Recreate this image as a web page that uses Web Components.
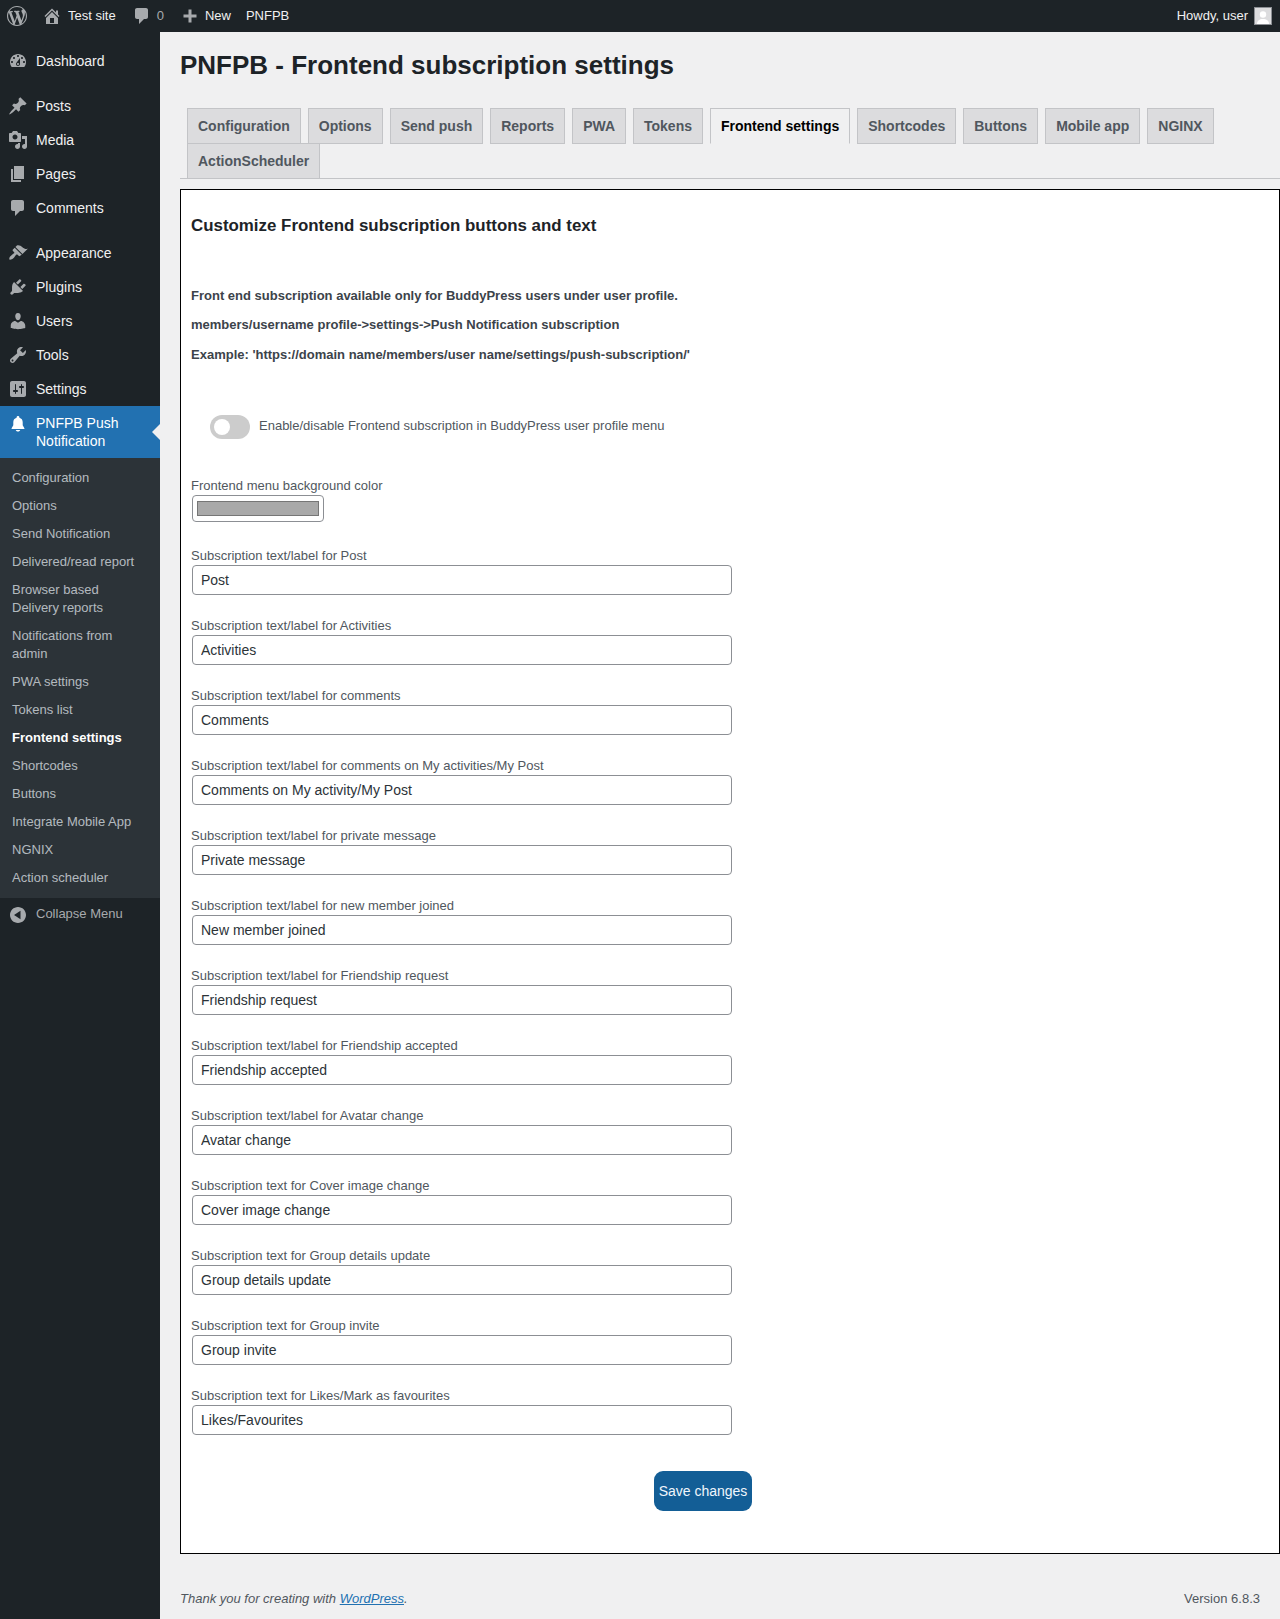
<!DOCTYPE html>
<html lang="en">
<head>
<meta charset="utf-8">
<title>PNFPB - Frontend subscription settings</title>
<style>
  html, body { margin: 0; padding: 0; background: #f0f0f1; }
  body { font: 13px/1.4 "Liberation Sans", Arial, sans-serif; color: #3c434a; }
</style>
</head>
<body>
<wp-admin-page></wp-admin-page>

<script>
const ICONS = {
  wordpress: 'M20 10c0-5.51-4.49-10-10-10C4.48 0 0 4.49 0 10c0 5.52 4.48 10 10 10 5.51 0 10-4.48 10-10zM7.78 15.37L4.37 6.22c.55-.02 1.17-.08 1.17-.08.5-.06.44-1.13-.06-1.11 0 0-1.45.11-2.37.11-.18 0-.37 0-.58-.01C4.12 2.69 6.87 1.11 10 1.11c2.33 0 4.45.87 6.05 2.34-.68-.11-1.65.39-1.65 1.58 0 .74.45 1.36.9 2.1.35.61.55 1.36.55 2.46 0 1.49-1.4 5-1.4 5l-3.03-8.37c.54-.02.82-.17.82-.17.5-.05.44-1.25-.06-1.22 0 0-1.44.12-2.38.12-.87 0-2.33-.12-2.33-.12-.5-.03-.56 1.2-.06 1.22l.92.08 1.26 3.41zM17.41 10c.24-.64.74-1.87.43-4.25.7 1.29 1.05 2.71 1.05 4.25 0 3.29-1.73 6.24-4.4 7.78.97-2.59 1.94-5.2 2.92-7.78zM6.1 18.09C3.12 16.65 1.11 13.53 1.11 10c0-1.3.23-2.48.72-3.59C3.25 10.3 4.67 14.2 6.1 18.09zm4.03-6.63l2.58 6.98c-.86.29-1.76.45-2.71.45-.79 0-1.57-.11-2.29-.33.81-2.38 1.62-4.74 2.42-7.1z',
  home: 'M16 8.5l1.53 1.53-1.06 1.06L10 4.62l-6.47 6.47-1.06-1.06L10 2.5l4 4v-2h2v4zm-6-2.46l6 5.99V18H4v-5.97zM12 17v-5H8v5h4z',
  comments: 'M5 2h9c1.1 0 2 .9 2 2v7c0 1.1-.9 2-2 2h-2l-5 5v-5H5c-1.1 0-2-.9-2-2V4c0-1.1.9-2 2-2z',
  plus: 'M8.5 3.5h3v5h5v3h-5v5h-3v-5h-5v-3h5z',
  dashboard: 'M3.76 16h12.48c1.1-1.37 1.76-3.11 1.76-5 0-4.42-3.58-8-8-8s-8 3.58-8 8c0 1.89.66 3.63 1.76 5zM10 4c.55 0 1 .45 1 1s-.45 1-1 1-1-.45-1-1 .45-1 1-1zM6 6c.55 0 1 .45 1 1s-.45 1-1 1-1-.45-1-1 .45-1 1-1zm8 0c.55 0 1 .45 1 1s-.45 1-1 1-1-.45-1-1 .45-1 1-1zm-5.37 5.55L12 7v6c0 1.1-.9 2-2 2s-2-.9-2-2c0-.57.24-1.08.63-1.45zM4 10c.55 0 1 .45 1 1s-.45 1-1 1-1-.45-1-1 .45-1 1-1zm12 0c.55 0 1 .45 1 1s-.45 1-1 1-1-.45-1-1 .45-1 1-1zm-5 3c0-.55-.45-1-1-1s-1 .45-1 1 .45 1 1 1 1-.45 1-1z',
  post: 'M10.44 3.02l1.82-1.82 6.36 6.35-1.83 1.82c-1.05-.68-2.48-.57-3.41.36l-.75.75c-.92.93-1.04 2.35-.35 3.41l-1.83 1.82-2.41-2.41-2.8 2.79c-.42.42-3.38 2.71-3.8 2.29s1.86-3.39 2.28-3.81l2.79-2.79L4.1 9.36l1.83-1.82c1.05.69 2.48.57 3.4-.36l.75-.75c.93-.92 1.05-2.35.36-3.41z',
  media: 'M13 11V4c0-.55-.45-1-1-1h-1.67L9 1H5L3.67 3H2c-.55 0-1 .45-1 1v7c0 .55.45 1 1 1h10c.55 0 1-.45 1-1zM7 4.5c1.38 0 2.5 1.12 2.5 2.5S8.38 9.5 7 9.5 4.5 8.38 4.5 7 5.62 4.5 7 4.5zM14 6h5v10.5c0 1.38-1.12 2.5-2.5 2.5S14 17.88 14 16.5s1.12-2.5 2.5-2.5c.17 0 .34.02.5.05V9h-3V6zm-4 8.05V13h2v3.5c0 1.38-1.12 2.5-2.5 2.5S7 17.88 7 16.5 8.12 14 9.5 14c.17 0 .34.02.5.05z',
  page: 'M6 15V2h10v13H6zm-1 1h8v2H3V5h2v11z',
  appearance: 'M14.48 11.06L7.41 3.99l1.5-1.5c.5-.56 2.3-.47 3.51.32 1.21.8 1.43 1.28 2.91 2.1 1.18.64 2.45 1.26 4.45.85zm-.71.71L6.7 4.7 4.93 6.47c-.39.39-.39 1.02 0 1.41l1.06 1.06c.39.39.39 1.03 0 1.42-.6.6-1.43 1.11-2.21 1.69-.35.26-.7.53-1.01.84C1.43 13.71.96 15.78 1.5 16.5c.54.54 2.6.07 4.14-1.48.31-.31.58-.66.84-1.01.58-.78 1.09-1.61 1.69-2.21.39-.39 1.03-.39 1.42 0l1.06 1.06c.39.39 1.02.39 1.41 0z',
  plugins: 'M13.11 4.36L9.87 7.6 8 5.73l3.24-3.24c.35-.34 1.05-.2 1.56.32.52.51.66 1.21.31 1.55zm-8 1.77l.91-1.12 9.01 9.01-1.19.84c-.71.71-2.63 1.16-3.82 1.16H6.14L4.9 17.26c-.59.59-1.54.59-2.12 0-.59-.58-.59-1.53 0-2.12l1.24-1.24v-3.88c0-1.13.4-3.19 1.09-3.89zm7.26 3.97l3.24-3.24c.34-.35 1.04-.21 1.55.31.52.51.66 1.21.31 1.55l-3.24 3.25z',
  users: 'M10 9.25c-2.27 0-2.73-3.44-2.73-3.44C7 4.02 7.82 2 9.97 2c2.16 0 2.98 2.02 2.71 3.81 0 0-.41 3.44-2.68 3.44zm0 2.57L12.72 10c2.39 0 4.52 2.33 4.52 4.53v2.49s-3.65 1.13-7.24 1.13c-3.65 0-7.24-1.13-7.24-1.13v-2.49c0-2.25 1.94-4.48 4.47-4.48z',
  tools: 'M16.68 9.77c-1.34 1.34-3.3 1.67-4.95.99l-5.41 6.52c-.99.99-2.59.99-3.58 0s-.99-2.59 0-3.57l6.52-5.42c-.68-1.65-.35-3.61.99-4.95 1.28-1.28 3.12-1.62 4.72-1.06l-2.89 2.89 2.82 2.82 2.86-2.87c.53 1.58.18 3.39-1.08 4.65zM3.81 16.21c.4.39 1.04.39 1.43 0 .4-.4.4-1.04 0-1.43-.39-.4-1.03-.4-1.43 0-.39.39-.39 1.03 0 1.43z',
  settings: 'M18 16V4c0-1.1-.9-2-2-2H4c-1.1 0-2 .9-2 2v12c0 1.1.9 2 2 2h12c1.1 0 2-.9 2-2zM8 11h1c.55 0 1 .45 1 1s-.45 1-1 1H8v1.5c0 .28-.22.5-.5.5s-.5-.22-.5-.5V13H6c-.55 0-1-.45-1-1s.45-1 1-1h1V5.5c0-.28.22-.5.5-.5s.5.22.5.5V11zm5-2h-1c-.55 0-1-.45-1-1s.45-1 1-1h1V5.5c0-.28.22-.5.5-.5s.5.22.5.5V7h1c.55 0 1 .45 1 1s-.45 1-1 1h-1v5.5c0 .28-.22.5-.5.5s-.5-.22-.5-.5V9z',
  bell: 'M10 3c-.8 0-1.4.6-1.4 1.4v.4C6.4 5.4 5.3 7 5.3 9.3v2.9L3.6 15.2v.9h12.8v-.9l-1.7-3v-2.9c0-2.3-1.1-3.9-3.3-4.5v-.4c0-.8-.6-1.4-1.4-1.4zM7.8 17h4.4c0 .9-1 1.5-2.2 1.5s-2.2-.6-2.2-1.5z',
  collapse: 'M10 2c-4.42 0-8 3.58-8 8s3.58 8 8 8 8-3.58 8-8-3.58-8-8-8zm2.5 12.2L6 10l6.5-4.2v8.4z',
}

// shadow root + template in one go
const define = (tag, html, onInit) => {
  const template = document.createElement('template')
  template.innerHTML = html
  customElements.define(tag, class extends HTMLElement {
    constructor() {
      super()
      this.attachShadow({ mode: 'open' }).appendChild(template.content.cloneNode(true))
    }
    connectedCallback() {
      if (onInit) onInit(this, this.shadowRoot)
    }
  })
}

const attr = (e, name) => e.getAttribute(name) || ''

// the name can land after connect (menu-item sets it from its own init)
customElements.define('wp-icon', class extends HTMLElement {
  static observedAttributes = ['name']

  constructor() {
    super()
    this.attachShadow({ mode: 'open' }).innerHTML = `
      <style>
        :host { display: block; width: 20px; height: 20px; flex: none; }
        svg { display: block; width: 100%; height: 100%; fill: currentColor; }
      </style>
      <svg viewBox="0 0 20 20"><path></path></svg>
    `
  }

  attributeChangedCallback(_, __, name) {
    this.shadowRoot.querySelector('path').setAttribute('d', ICONS[name] || '')
  }
})

define('bar-item', `
  <style>
    :host { display: flex; align-items: center; height: 32px; color: #f0f0f1; font-size: 13px; line-height: 32px; white-space: nowrap; }
    ::slotted(wp-icon) { color: #a7aaad; margin-right: 6px; }
  </style>
  <slot name="icon"></slot><slot></slot>
`)

define('admin-bar', `
  <style>
    :host { display: flex; align-items: center; height: 32px; padding: 0 8px 0 7px; background: #1d2327; font-size: 13px; }
    .spacer { flex: 1; }
    .avatar { width: 16px; height: 16px; border: 1px solid #8c8f94; background: #dcdcde; margin-left: 6px; overflow: hidden; }
    .avatar svg { display: block; width: 16px; height: 16px; fill: #fff; }
    .logo { margin-right: 15px; }
    .site { margin-right: 16px; }
    .count { margin-right: 16px; }
    .new { margin-right: 15px; }
    .dim { color: #a7aaad; margin-left: -1px; }
    .plus { margin-right: 5px; }
  </style>
  <bar-item class="logo"><wp-icon slot="icon" name="wordpress" style="margin-right:0"></wp-icon></bar-item>
  <bar-item class="site"><wp-icon slot="icon" name="home"></wp-icon>Test site</bar-item>
  <bar-item class="count"><wp-icon slot="icon" name="comments"></wp-icon><span class="dim">0</span></bar-item>
  <bar-item class="new"><wp-icon slot="icon" name="plus" class="plus"></wp-icon>New</bar-item>
  <bar-item>PNFPB</bar-item>
  <div class="spacer"></div>
  <bar-item>Howdy, user</bar-item>
  <div class="avatar"><svg viewBox="0 0 16 16"><circle cx="8" cy="6.5" r="3.2"></circle><path d="M2 16c0-3.5 2.5-5 6-5s6 1.5 6 5z"></path></svg></div>
`)

define('menu-item', `
  <style>
    :host { display: flex; align-items: flex-start; width: 160px; box-sizing: border-box; min-height: 34px; padding: 7px 8px 8px 8px; color: #f0f0f1; font-size: 14px; line-height: 18.2px; position: relative; }
    :host([current]) { margin-top: -1px; padding-top: 8px; padding-bottom: 7.6px; background: #2271b1; color: #fff; }
    wp-icon { color: #a7aaad; margin-right: 8px; margin-top: -1px; }
    :host([current]) wp-icon { color: #fff; }
    .arrow { display: none; position: absolute; right: 0; top: 18px; border: 8px solid transparent; border-right-color: #f0f0f1; border-left: 0; }
    :host([current]) .arrow { display: block; }
  </style>
  <wp-icon></wp-icon><div><slot></slot></div><span class="arrow"></span>
`, (e, root) => {
  root.querySelector('wp-icon').setAttribute('name', attr(e, 'icon'))
})

define('sub-item', `
  <style>
    :host { display: block; padding: 5px 12px; color: rgba(240,246,252,.7); font-size: 13px; line-height: 18px; }
    :host([current]) { color: #fff; font-weight: 600; }
  </style>
  <slot></slot>
`)

define('side-menu', `
  <style>
    :host { display: block; width: 160px; flex: none; background: #1d2327; padding-top: 13px; }
    .gap { height: 11px; }
    .sub { background: #2c3338; padding: 6px 0 6px; }
    .collapse { display: flex; align-items: flex-start; padding: 7px 8px 8px 8px; color: #a7aaad; font-size: 13px; line-height: 18.2px; }
    .collapse wp-icon { margin-right: 8px; }
  </style>
  <menu-item icon="dashboard">Dashboard</menu-item>
  <div class="gap"></div>
  <menu-item icon="post">Posts</menu-item>
  <menu-item icon="media">Media</menu-item>
  <menu-item icon="page">Pages</menu-item>
  <menu-item icon="comments">Comments</menu-item>
  <div class="gap"></div>
  <menu-item icon="appearance">Appearance</menu-item>
  <menu-item icon="plugins">Plugins</menu-item>
  <menu-item icon="users">Users</menu-item>
  <menu-item icon="tools">Tools</menu-item>
  <menu-item icon="settings">Settings</menu-item>
  <menu-item icon="bell" current>PNFPB Push Notification</menu-item>
  <div class="sub">
    <sub-item>Configuration</sub-item>
    <sub-item>Options</sub-item>
    <sub-item>Send Notification</sub-item>
    <sub-item>Delivered/read report</sub-item>
    <sub-item>Browser based Delivery reports</sub-item>
    <sub-item>Notifications from admin</sub-item>
    <sub-item>PWA settings</sub-item>
    <sub-item>Tokens list</sub-item>
    <sub-item current>Frontend settings</sub-item>
    <sub-item>Shortcodes</sub-item>
    <sub-item>Buttons</sub-item>
    <sub-item>Integrate Mobile App</sub-item>
    <sub-item>NGNIX</sub-item>
    <sub-item>Action scheduler</sub-item>
  </div>
  <div class="collapse"><wp-icon name="collapse"></wp-icon><span>Collapse Menu</span></div>
`)

define('nav-tab', `
  <style>
    :host { display: block; box-sizing: border-box; height: 36px; margin: 0 0 -1px 7px; padding: 5px 10px; background: #dcdcde; border: 1px solid #c3c4c7; color: #50575e; font-size: 14px; font-weight: 600; line-height: 24px; white-space: nowrap; }
    :host([active]) { background: #f0f0f1; color: #000; border-bottom-color: #f0f0f1; }
  </style>
  <slot></slot>
`)

define('nav-tabs', `
  <style>
    :host { display: flex; flex-wrap: wrap; border-bottom: 1px solid #c3c4c7; }
  </style>
  <slot></slot>
`)

define('text-field', `
  <style>
    :host { display: block; width: 543px; margin-bottom: 22px; }
    label { display: block; color: #50575e; font-size: 13px; line-height: 18px; }
    input { display: block; box-sizing: border-box; width: 540px; height: 30px; margin-left: 1px; padding: 0 8px; border: 1px solid #8c8f94; border-radius: 4px; background: #fff; color: #2c3338; font: 14px/28px "Liberation Sans", Arial, sans-serif; outline: none; }
  </style>
  <label></label>
  <input type="text">
`, (e, root) => {
  root.querySelector('label').textContent = attr(e, 'label')
  root.querySelector('input').setAttribute('value', attr(e, 'value'))
})

define('toggle-field', `
  <style>
    :host { display: flex; align-items: center; gap: 9px; margin-left: 19px; color: #50575e; font-size: 13px; }
    .track { position: relative; width: 40px; height: 24px; border-radius: 12px; background: #ccc; flex: none; }
    .knob { position: absolute; left: 4px; top: 4px; width: 16px; height: 16px; border-radius: 50%; background: #fff; }
    .text { margin-top: -2px; }
  </style>
  <span class="track"><span class="knob"></span></span>
  <span class="text"><slot></slot></span>
`)

define('color-field', `
  <style>
    :host { display: block; color: #50575e; font-size: 13px; line-height: 18px; }
    .well { display: block; box-sizing: border-box; width: 132px; height: 27px; margin: 0 0 0 1px; padding: 5px 4px; border: 1px solid #8c8f94; border-radius: 4px; background: #fff; }
    .swatch { display: block; box-sizing: border-box; height: 15px; background: #a9a9a9; border: 1px solid #767676; }
  </style>
  <div><slot></slot></div>
  <span class="well"><span class="swatch"></span></span>
`)

define('settings-form', `
  <style>
    :host { display: block; box-sizing: border-box; background: #fff; border: 1px solid #000; padding: 10px; height: 1365px; color: #1d2327; }
    h2 { margin: 15px 0 48.5px; font-size: 16.9px; line-height: 22px; font-weight: 600; }
    p { margin: 0 0 10px; font-size: 13px; line-height: 19.5px; font-weight: 600; color: #3c434a; }
    toggle-field { margin-top: 51px; }
    color-field { margin-top: 38px; margin-bottom: 25px; }
    .submit { display: flex; justify-content: center; width: 1024px; margin-top: 36px; }
    button { box-sizing: border-box; width: 98px; height: 40px; padding: 0; border: 0; border-radius: 9px; background: #135e96; color: #f0f6fc; font: 14px "Liberation Sans", Arial, sans-serif; }
  </style>
  <h2>Customize Frontend subscription buttons and text</h2>
  <p>Front end subscription available only for BuddyPress users under user profile.</p>
  <p>members/username profile-&gt;settings-&gt;Push Notification subscription</p>
  <p>Example: 'https://domain name/members/user name/settings/push-subscription/'</p>
  <toggle-field>Enable/disable Frontend subscription in BuddyPress user profile menu</toggle-field>
  <color-field>Frontend menu background color</color-field>
  <text-field label="Subscription text/label for Post" value="Post"></text-field>
  <text-field label="Subscription text/label for Activities" value="Activities"></text-field>
  <text-field label="Subscription text/label for comments" value="Comments"></text-field>
  <text-field label="Subscription text/label for comments on My activities/My Post" value="Comments on My activity/My Post"></text-field>
  <text-field label="Subscription text/label for private message" value="Private message"></text-field>
  <text-field label="Subscription text/label for new member joined" value="New member joined"></text-field>
  <text-field label="Subscription text/label for Friendship request" value="Friendship request"></text-field>
  <text-field label="Subscription text/label for Friendship accepted" value="Friendship accepted"></text-field>
  <text-field label="Subscription text/label for Avatar change" value="Avatar change"></text-field>
  <text-field label="Subscription text for Cover image change" value="Cover image change"></text-field>
  <text-field label="Subscription text for Group details update" value="Group details update"></text-field>
  <text-field label="Subscription text for Group invite" value="Group invite"></text-field>
  <text-field label="Subscription text for Likes/Mark as favourites" value="Likes/Favourites"></text-field>
  <div class="submit"><button>Save changes</button></div>
`)

define('wp-footer', `
  <style>
    :host { display: flex; justify-content: space-between; margin-top: 36px; padding-right: 20px; font-size: 13px; line-height: 18px; color: #50575e; }
    a { color: #2271b1; }
    em { font-style: italic; }
  </style>
  <em>Thank you for creating with <a href="#">WordPress</a>.</em>
  <span>Version 6.8.3</span>
`)

define('wp-admin-page', `
  <style>
    :host { display: block; height: 1619px; overflow: hidden; }
    .cols { display: flex; height: 1587px; }
    main { flex: 1; min-width: 0; padding-left: 20px; }
    h1 { margin: 0; padding: 19px 0 28px; font-size: 26px; line-height: 29px; font-weight: 600; color: #1d2327; }
    settings-form { margin-top: 10px; }
  </style>
  <admin-bar></admin-bar>
  <div class="cols">
    <side-menu></side-menu>
    <main>
      <h1>PNFPB - Frontend subscription settings</h1>
      <nav-tabs>
        <nav-tab>Configuration</nav-tab>
        <nav-tab>Options</nav-tab>
        <nav-tab>Send push</nav-tab>
        <nav-tab>Reports</nav-tab>
        <nav-tab>PWA</nav-tab>
        <nav-tab>Tokens</nav-tab>
        <nav-tab active>Frontend settings</nav-tab>
        <nav-tab>Shortcodes</nav-tab>
        <nav-tab>Buttons</nav-tab>
        <nav-tab>Mobile app</nav-tab>
        <nav-tab>NGINX</nav-tab>
        <nav-tab>ActionScheduler</nav-tab>
      </nav-tabs>
      <settings-form></settings-form>
      <wp-footer></wp-footer>
    </main>
  </div>
`)
</script>
</body>
</html>
